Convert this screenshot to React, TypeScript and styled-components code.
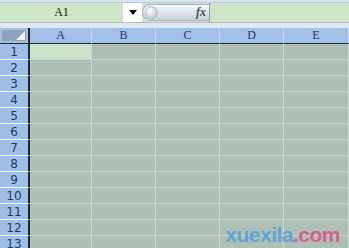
import React from "react";
import styled, { createGlobalStyle } from "styled-components";

const Global = createGlobalStyle`
  html, body { margin: 0; padding: 0; width: 349px; height: 248px; overflow: hidden; background: #dfe7ef; }
  * { box-sizing: border-box; }
`;

const Page = styled.div`
  position: relative;
  width: 349px;
  height: 248px;
  overflow: hidden;
  display: flex;
  flex-direction: column;
  background: #dfe7ef;
  & > * { flex-shrink: 0; }
`;

const TopStrip = styled.div`
  height: 3px;
  background: #dbe4ee;
  border-bottom: 1px solid #b9c8d8;
`;

const FormulaBar = styled.div`
  height: 20px;
  display: flex;
  align-items: stretch;
  background: #cfe5ca;
  border-bottom: 1px solid #aebfd0;
`;

const NameBox = styled.div`
  width: 123px;
  background: #cfe5ca;
  display: flex;
  align-items: center;
  justify-content: center;
  font-family: "Liberation Serif", serif;
  font-size: 12px;
  color: #111;
`;

const Dropdown = styled.div`
  width: 19px;
  background: #ffffff;
  display: flex;
  align-items: center;
  justify-content: center;
  padding-left: 1px;
`;

const FxPill = styled.div`
  width: 67px;
  margin: 1px 0;
  display: flex;
  align-items: center;
  justify-content: space-between;
  padding: 0 3px 0 2px;
  background: linear-gradient(#f8f9fb, #dde2ea 55%, #c9d0da);
  border: 1px solid #a9b4c3;
  border-right: none;
  border-radius: 9px 0 0 9px;
`;

const Knob = styled.div`
  width: 13px;
  height: 13px;
  border-radius: 50%;
  background: radial-gradient(circle at 35% 35%, #ffffff, #c9ced6 70%, #9aa3b0);
  border: 1px solid #b3bbc6;
`;

const Fx = styled.span`
  font-family: "Liberation Serif", serif;
  font-style: italic;
  font-weight: bold;
  font-size: 12px;
  color: #4a4f58;
`;

const FormulaInput = styled.div`
  flex: 1;
  background: #cfe5ca;
  border-left: 1px solid #8f9cab;
`;

const Spacer = styled.div`
  height: 5px;
  background: #e2e9f0;
`;

const Grid = styled.div`
  display: grid;
  grid-template-columns: 30px 62px 64px 64px 64px 65px;
  grid-auto-rows: 16px;
`;

const Corner = styled.div`
  background: #a9bed9;
  border-right: 2px solid #1d2a36;
  border-bottom: 1px solid #1d2a36;
  padding: 2px;
  display: flex;
`;

const CornerInner = styled.div`
  flex: 1;
  background: #8ca3c1;
  position: relative;
  overflow: hidden;
  &::after {
    content: "";
    position: absolute;
    right: 1px;
    bottom: 1px;
    border-style: solid;
    border-width: 0 0 9px 9px;
    border-color: transparent transparent #eef3f9 transparent;
  }
`;

const ColHead = styled.div`
  background: #a2c0e8;
  border-right: 1px solid #c7d8ee;
  border-bottom: 1px solid #1d2a36;
  display: flex;
  align-items: center;
  justify-content: center;
  font-family: "Liberation Serif", serif;
  font-size: 12px;
  color: #1c3a66;
`;

const RowHead = styled.div`
  background: #9fbfe8;
  border-right: 2px solid #1d2a36;
  border-bottom: 1px solid #f2f6fb;
  display: flex;
  align-items: center;
  justify-content: center;
  font-family: "DejaVu Sans", sans-serif;
  font-size: 12px;
  color: #1c3a66;
`;

const Cell = styled.div<{ $active?: boolean }>`
  background: ${(p) => (p.$active ? "#cde4cb" : "#aebfb5")};
  border-right: 1px solid #cbd8d0;
  border-bottom: 1px solid #c6d4cc;
`;

const Watermark = styled.div`
  position: absolute;
  right: 9px;
  bottom: 1px;
  font-family: "Liberation Sans", Arial, sans-serif;
  font-weight: bold;
  font-size: 21px;
  letter-spacing: -0.5px;
  opacity: 0.8;
`;

const WmBlue = styled.span`
  color: #4c9fd8;
`;
const WmPink = styled.span`
  color: #e0488a;
`;

const cols = ["A", "B", "C", "D", "E"];
const rows = Array.from({ length: 13 }, (_, i) => i + 1);

export default function App() {
  return (
    <Page>
      <Global />
      <TopStrip />
      <FormulaBar>
        <NameBox>A1</NameBox>
        <Dropdown>
          <svg width="8" height="5" viewBox="0 0 8 5">
            <polygon points="0,0 8,0 4,5" fill="#000" />
          </svg>
        </Dropdown>
        <FxPill>
          <Knob />
          <Fx>fx</Fx>
        </FxPill>
        <FormulaInput />
      </FormulaBar>
      <Spacer />
      <Grid>
        <Corner>
          <CornerInner />
        </Corner>
        {cols.map((c) => (
          <ColHead key={c}>{c}</ColHead>
        ))}
        {rows.map((r) => (
          <React.Fragment key={r}>
            <RowHead>{r}</RowHead>
            {cols.map((c) => (
              <Cell key={c} $active={r === 1 && c === "A"} />
            ))}
          </React.Fragment>
        ))}
      </Grid>
      <Watermark>
        <WmBlue>xuexila</WmBlue>
        <WmPink>.com</WmPink>
      </Watermark>
    </Page>
  );
}
